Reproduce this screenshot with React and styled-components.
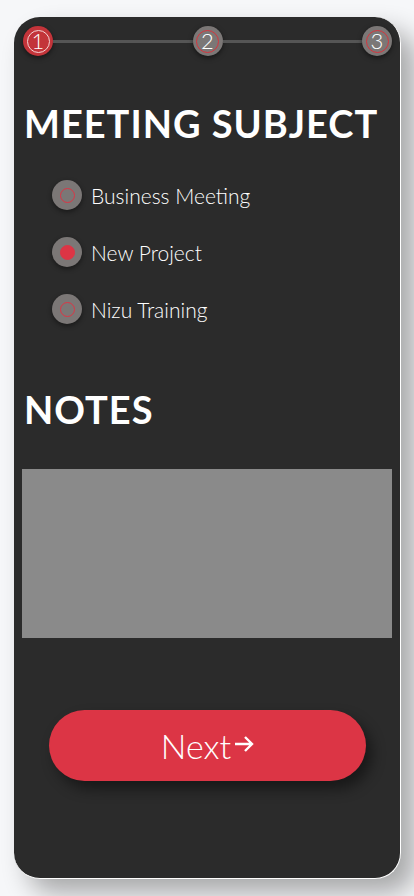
import React from "react";
import styled, { createGlobalStyle } from "styled-components";

const Global = createGlobalStyle`
  html, body { margin: 0; padding: 0; background: #f6f7f9; }
  body { font-family: "Lato", "Noto Sans", sans-serif; }
`;

const Page = styled.div`
  padding: 17px 13px 17px 14px;
  height: 896px;
  box-sizing: border-box;
`;

const Card = styled.div`
  width: 387px;
  height: 862px;
  box-sizing: border-box;
  background: #2b2b2b;
  border-radius: 26px;
  border-right: 1px solid #fff;
  border-bottom: 1px solid #fff;
  box-shadow: 14px 14px 26px rgba(0, 0, 0, 0.32);
  display: flex;
  flex-direction: column;
  padding: 9px 8px 0 8px;
`;

const Stepper = styled.div`
  display: flex;
  align-items: center;
  padding: 0 0 0 1px;
`;

const StepLine = styled.div`
  flex: 1;
  height: 3px;
  background: #555;
`;

const Step = styled.div`
  width: 30px;
  height: 30px;
  border-radius: 50%;
  background: ${(p) => (p.$active ? "#c3343a" : "#7b7776")};
  box-shadow: 0 2px 5px rgba(0, 0, 0, 0.5);
  display: flex;
  align-items: center;
  justify-content: center;
  flex-shrink: 0;
`;

const StepInner = styled.div`
  width: 23px;
  height: 23px;
  border-radius: 50%;
  border: 1px solid ${(p) => (p.$active ? "#f4d4d5" : "#d6343d")};
  box-sizing: border-box;
  display: flex;
  align-items: center;
  justify-content: center;
  color: #fff;
  font-size: 22px;
  font-weight: 300;
  line-height: 1;
`;

const Heading = styled.h1`
  margin: ${(p) => p.$mt} 0 0 2px;
  color: #fff;
  font-size: 38px;
  font-weight: 700;
  letter-spacing: 1px;
  line-height: 48px;
  white-space: nowrap;
`;

const RadioList = styled.div`
  display: flex;
  flex-direction: column;
  gap: 27px;
  margin: 33px 0 0 30px;
`;

const RadioRow = styled.label`
  display: flex;
  align-items: center;
  gap: 9px;
  color: #fff;
  font-size: 21px;
  font-weight: 300;
`;

const RadioOuter = styled.span`
  width: 30px;
  height: 30px;
  border-radius: 50%;
  background: #7b7776;
  box-shadow: 0 2px 5px rgba(0, 0, 0, 0.45);
  display: flex;
  align-items: center;
  justify-content: center;
`;

const RadioDot = styled.span`
  width: 15px;
  height: 15px;
  border-radius: 50%;
  box-sizing: border-box;
  border: 1.5px solid #dc3545;
  background: ${(p) => (p.$checked ? "#dc3545" : "transparent")};
`;

const Notes = styled.div`
  margin: 36px 0 0 0;
  height: 169px;
  background: #8a8a8a;
`;

const NextButton = styled.button`
  margin: 72px 0 0 27px;
  width: 317px;
  height: 71px;
  border: none;
  border-radius: 36px;
  background: #dc3545;
  color: #fff;
  font-family: "Lato", "Noto Sans", sans-serif;
  font-size: 34px;
  font-weight: 300;
  box-shadow: 6px 8px 14px rgba(0, 0, 0, 0.45);
  display: flex;
  align-items: center;
  justify-content: center;
`;

const Arrow = styled.svg`
  margin-left: 3px;
  margin-top: -4px;
`;

const subjects = [
  { label: "Business Meeting", checked: false },
  { label: "New Project", checked: true },
  { label: "Nizu Training", checked: false },
];

export default function App() {
  return (
    <>
      <Global />
      <Page>
        <Card>
          <Stepper>
            <Step $active>
              <StepInner $active>1</StepInner>
            </Step>
            <StepLine />
            <Step>
              <StepInner>2</StepInner>
            </Step>
            <StepLine />
            <Step>
              <StepInner>3</StepInner>
            </Step>
          </Stepper>
          <Heading $mt="43px">MEETING SUBJECT</Heading>
          <RadioList>
            {subjects.map((s) => (
              <RadioRow key={s.label}>
                <RadioOuter>
                  <RadioDot $checked={s.checked} />
                </RadioOuter>
                {s.label}
              </RadioRow>
            ))}
          </RadioList>
          <Heading $mt="61px">NOTES</Heading>
          <Notes />
          <NextButton>
            Next
            <Arrow width="20" height="18" viewBox="0 0 20 18">
              <path d="M1 9H18M11 2L18 9L11 16" fill="none" stroke="#fff" strokeWidth="2.4" />
            </Arrow>
          </NextButton>
        </Card>
      </Page>
    </>
  );
}
